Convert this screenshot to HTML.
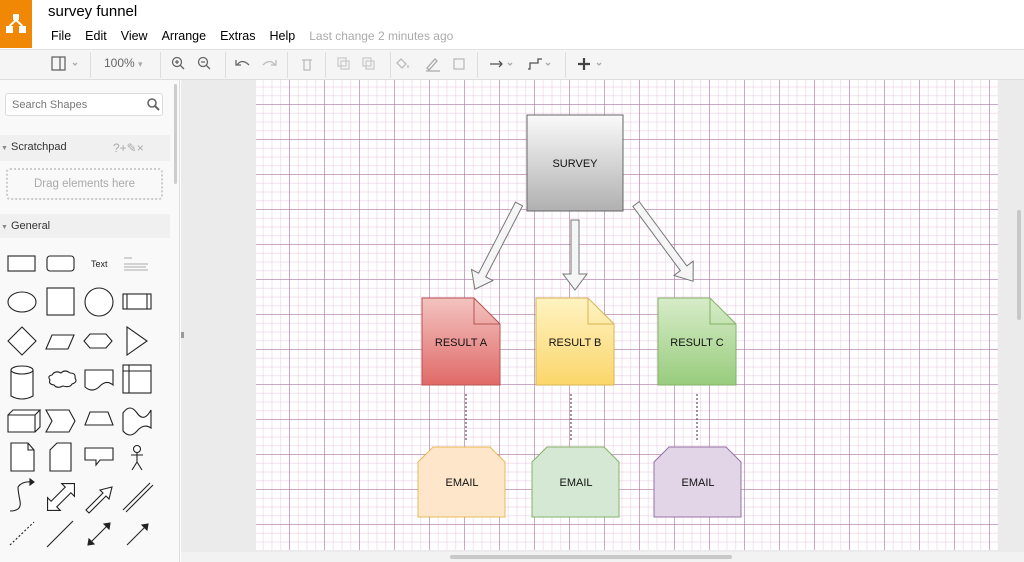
<!DOCTYPE html>
<html><head><meta charset="utf-8"><style>
*{margin:0;padding:0;box-sizing:border-box}
body{width:1024px;height:562px;overflow:hidden;background:#fff;font-family:"Liberation Sans",Arial,sans-serif;position:relative}
.abs{position:absolute}
.menu span{margin-right:14px;font-size:12.5px;color:#000}
.tb{color:#666;font-size:12px}
.sep{position:absolute;top:52px;width:1px;height:26px;background:#ddd}
#canvas{left:256px;top:80px;width:742px;height:470px;background-color:#fff;
background-image:
linear-gradient(90deg,rgba(165,110,155,.5) 1px,transparent 1px),
linear-gradient(0deg,rgba(165,110,155,.5) 1px,transparent 1px),
linear-gradient(90deg,rgba(232,200,226,.55) 1px,transparent 1px),
linear-gradient(0deg,rgba(232,200,226,.55) 1px,transparent 1px);
background-size:35px 35px,35px 35px,8.75px 8.75px,8.75px 8.75px;
background-position:-247px -80px,-247px -80px,-247px -80px,-247px -80px}
.lbl{font-size:11px;fill:#111;font-family:"Liberation Sans",Arial,sans-serif}
</style></head><body>
<div class="abs" style="left:0;top:0;width:32px;height:48px;background:#f08705"></div>
<svg class="abs" style="left:4px;top:12px" width="24" height="24" viewBox="0 0 24 24">
<rect x="9" y="2" width="6" height="6" fill="#fff"/><rect x="2" y="14" width="7" height="7" fill="#fff"/><rect x="15" y="14" width="7" height="7" fill="#fff"/>
<path d="M12 8 L5.5 14 M12 8 L18.5 14" stroke="#fff" stroke-width="2"/></svg>
<div class="abs" style="left:48px;top:3px;font-size:15px;color:#000">survey funnel</div>
<div class="abs menu" style="left:51px;top:27px"><span>File</span><span>Edit</span><span>View</span><span>Arrange</span><span>Extras</span><span>Help</span><span style="color:#aaa;font-size:12px">Last change 2 minutes ago</span></div>
<div class="abs" style="left:0;top:49px;width:1024px;height:31px;background:#f5f5f5;border-top:1px solid #e0e0e0;border-bottom:1px solid #ddd"></div>
<svg class="abs" style="left:50px;top:55px" width="560" height="18" viewBox="0 0 560 18" fill="none" stroke="#666" stroke-width="1.3">
<rect x="2" y="2" width="13" height="13"/><path d="M10 2v13" /><path d="M23 8l2 2 2-2" stroke="#aaa"/>
<circle cx="127" cy="7" r="4.5"/><path d="M130 10l4 4M125 7h4M127 5v4"/>
<circle cx="153" cy="7" r="4.5"/><path d="M156 10l4 4M151 7h4"/>
<path d="M187 10 q5 -7 12 0 M186 5v5h5"/>
<path d="M225 10 q-5 -7 -12 0 M226 5v5h-5" stroke="#bbb"/>
<path d="M252 5h10M254 5v10h6V5" stroke="#bbb"/>
<rect x="288" y="3" width="8" height="8" stroke="#ccc"/><rect x="291" y="6" width="8" height="8" stroke="#ccc"/>
<rect x="313" y="3" width="8" height="8" stroke="#ccc"/><rect x="316" y="6" width="8" height="8" stroke="#ccc"/>
<path d="M351 4l5 5-4 4-5-5z M358 10v3" stroke="#bbb"/>
<path d="M377 13l8-9 2 2-8 9z M376 16h14" stroke="#aaa"/>
<rect x="404" y="4" width="10" height="10" stroke="#bbb"/>
<path d="M440 9h12 M449 6l3 3-3 3" stroke="#555"/><path d="M458 8l2 2 2-2" stroke="#aaa"/>
<path d="M478 14h2v-6h8v-4h4" stroke="#555"/><path d="M496 8l2 2 2-2" stroke="#aaa"/>
<path d="M534 3v12M528 9h12" stroke="#444" stroke-width="2.2"/><path d="M547 8l2 2 2-2" stroke="#aaa"/>
</svg>
<div class="abs tb" style="left:104px;top:56px">100% <span style="color:#aaa;font-size:9px">▾</span></div>
<div class="sep" style="left:90px"></div><div class="sep" style="left:160px"></div><div class="sep" style="left:225px"></div><div class="sep" style="left:287px"></div><div class="sep" style="left:325px"></div><div class="sep" style="left:390px"></div><div class="sep" style="left:477px"></div><div class="sep" style="left:565px"></div>
<div class="abs" style="left:0;top:80px;width:180px;height:482px;background:#f9f9f9;border-right:1px solid #ddd"></div>
<div class="abs" style="left:174px;top:84px;width:3px;height:100px;background:#ccc;border-radius:2px"></div>
<div class="abs" style="left:5px;top:93px;width:158px;height:23px;background:#fff;border:1px solid #ddd;border-radius:3px;font-size:11px;color:#777;padding:5px 6px">Search Shapes</div>
<svg class="abs" style="left:146px;top:97px" width="14" height="14"><circle cx="6" cy="6" r="4" stroke="#666" stroke-width="1.6" fill="none"/><path d="M9 9l4 4" stroke="#666" stroke-width="2"/></svg>
<div class="abs" style="left:0;top:135px;width:170px;height:26px;background:#f0f0f0"></div>
<div class="abs" style="left:1px;top:141px;font-size:11px;color:#333"><span style="font-size:7px;color:#888">▼</span> Scratchpad</div>
<div class="abs" style="left:113px;top:141px;font-size:12px;color:#aaa">?+✎×</div>
<div class="abs" style="left:6px;top:168px;width:157px;height:32px;border:2px dotted #ccc;border-radius:4px;font-size:11.5px;color:#aaa;text-align:center;line-height:28px">Drag elements here</div>
<div class="abs" style="left:0;top:214px;width:170px;height:24px;background:#f0f0f0"></div>
<div class="abs" style="left:1px;top:220px;font-size:11px;color:#333"><span style="font-size:7px;color:#888">▼</span> General</div>
<svg class="abs" style="left:0;top:240px" width="172" height="315" viewBox="0 240 172 315" fill="#fff" stroke="#222" stroke-width="1.1">
<rect x="8" y="256" width="27" height="15"/><rect x="47" y="256" width="27" height="15" rx="3"/>
<text x="91" y="267" font-size="9" fill="#222" stroke="none" font-family="Liberation Sans">Text</text>
<path d="M124 258h8M124 264h24M124 267h22M124 270h24" stroke="#aaa" stroke-width="1"/>
<ellipse cx="22" cy="302" rx="14" ry="10"/><rect x="47" y="288" width="27" height="27"/><circle cx="99" cy="302" r="14"/><rect x="123" y="294" width="28" height="15"/><path d="M127 294v15M147 294v15"/>
<path d="M22 327l14 14-14 14-14-14z"/><path d="M52 335h22l-6 14h-22z"/><path d="M90 334h16l6 7-6 7h-16l-6-7z"/><path d="M127 327l20 14-20 14z"/>
<path d="M11 370v26q11 6 22 0v-26"/><ellipse cx="22" cy="370" rx="11" ry="4"/>
<path d="M52 375q3-5 9-2q4-4 9 0q6 0 5 5q3 4-3 6q-2 4-9 2q-6 3-9-1q-6-1-4-5q-3-4 2-5z"/>
<path d="M85 370h28v15q-7-6-14 2q-7 6-14 0z"/><rect x="123" y="365" width="28" height="28"/><path d="M123 371h28M129 365v28"/>
<path d="M8 415h27v17h-27z M8 415l5-5h27l-5 5M35 432l5-5v-17"/>
<path d="M46 410h23l6 11-6 11h-23l6-11z"/><path d="M90 412h18l5 13h-28z"/><path d="M123 413q7-10 14 0t14-3v18q-7-5-14 3t-14 0z"/>
<path d="M11 443h17l6 7v21h-23z M28 443v7h6"/><path d="M57 443h14v28h-21v-21z"/><path d="M85 448h28v12h-13l-4 5v-5h-11z"/>
<circle cx="137" cy="449" r="3.5"/><path d="M137 453v9M131 455h12M137 462l-5 8M137 462l5 8"/>
<path d="M10 511q12 0 10-10t-2-14q4-6 14-5" fill="none"/><path d="M30 479l4 3-4 3z" fill="#222"/>
<polygon transform="translate(61,497) rotate(-45)" points="-19,0 -10,-9 -10,-4 10,-4 10,-9 19,0 10,9 10,4 -10,4 -10,9"/>
<path d="M86 510l3 3 17-17 3 3 3-12-12 3 3 3-17 17z"/>
<path d="M123 510l27-27M126 512l27-27" fill="none"/>
<path d="M10 545l24-23" stroke-dasharray="2 2"/><path d="M47 547l26-26"/><path d="M89 544l20-20" fill="none"/><path d="M88 545l6-1-5-5z M110 523l-6 1 5 5z" fill="#222"/>
<path d="M127 545l20-20" fill="none"/><path d="M148 524l-6 1 5 5z" fill="#222"/>
</svg>
<div class="abs" style="left:181px;top:80px;width:843px;height:482px;background:#ebebeb"></div>
<div class="abs" style="left:181px;top:332px;width:3px;height:6px;background:#999"></div>
<div class="abs" style="left:1017px;top:210px;width:4px;height:110px;background:#c8c8c8;border-radius:2px"></div>
<div class="abs" style="left:181px;top:552px;width:843px;height:10px;background:#f2f2f2"></div>
<div class="abs" style="left:450px;top:555px;width:282px;height:4px;background:#c8c8c8;border-radius:2px"></div>
<div id="canvas" class="abs"></div>
<svg class="abs" style="left:0;top:0" width="1024" height="562">
<defs>
<linearGradient id="gs" x1="0" y1="0" x2="0" y2="1"><stop offset="0" stop-color="#fafafa"/><stop offset="1" stop-color="#b0b0b0"/></linearGradient>
<linearGradient id="gr" x1="0" y1="0" x2="0" y2="1"><stop offset="0" stop-color="#f3c3c0"/><stop offset="1" stop-color="#e06a68"/></linearGradient>
<linearGradient id="gy" x1="0" y1="0" x2="0" y2="1"><stop offset="0" stop-color="#fff3c2"/><stop offset="1" stop-color="#fbd66a"/></linearGradient>
<linearGradient id="gg" x1="0" y1="0" x2="0" y2="1"><stop offset="0" stop-color="#d7ecc9"/><stop offset="1" stop-color="#98cc7c"/></linearGradient>
</defs>
<rect x="527" y="115" width="96" height="96" fill="url(#gs)" stroke="#666"/>
<text class="lbl" x="575" y="167" text-anchor="middle">SURVEY</text>
<g fill="#f5f5f5" stroke="#777" stroke-width="1">
<polygon transform="translate(519,204) rotate(117.4)" points="0,-4 80,-4 80,-12 96,0 80,12 80,4 0,4"/>
<polygon transform="translate(575,220) rotate(90)" points="0,-4 54,-4 54,-12 70,0 54,12 54,4 0,4"/>
<polygon transform="translate(636,204) rotate(53.5)" points="0,-4 80,-4 80,-12 96,0 80,12 80,4 0,4"/>
</g>
<g stroke-width="1">
<path d="M422 298h52l26 26v61h-78z" fill="url(#gr)" stroke="#b85450"/><path d="M474 298v26h26" fill="none" stroke="#b85450"/>
<path d="M536 298h52l26 26v61h-78z" fill="url(#gy)" stroke="#d6b656"/><path d="M588 298v26h26" fill="none" stroke="#d6b656"/>
<path d="M658 298h52l26 26v61h-78z" fill="url(#gg)" stroke="#82b366"/><path d="M710 298v26h26" fill="none" stroke="#82b366"/>
</g>
<text class="lbl" x="461" y="346" text-anchor="middle">RESULT A</text>
<text class="lbl" x="575" y="346" text-anchor="middle">RESULT B</text>
<text class="lbl" x="697" y="346" text-anchor="middle">RESULT C</text>
<g stroke="#333" stroke-dasharray="2 2"><path d="M466 394v46M571 394v46M697 394v46"/></g>
<path d="M433 447h57l15 15v55h-87v-55z" fill="#fde6c9" stroke="#d79b00" stroke-opacity=".6"/>
<path d="M547 447h57l15 15v55h-87v-55z" fill="#d5e8d4" stroke="#82b366"/>
<path d="M669 447h57l15 15v55h-87v-55z" fill="#e1d5e7" stroke="#9673a6"/>
<text class="lbl" x="462" y="486" text-anchor="middle">EMAIL</text>
<text class="lbl" x="576" y="486" text-anchor="middle">EMAIL</text>
<text class="lbl" x="698" y="486" text-anchor="middle">EMAIL</text>
</svg>
</body></html>
